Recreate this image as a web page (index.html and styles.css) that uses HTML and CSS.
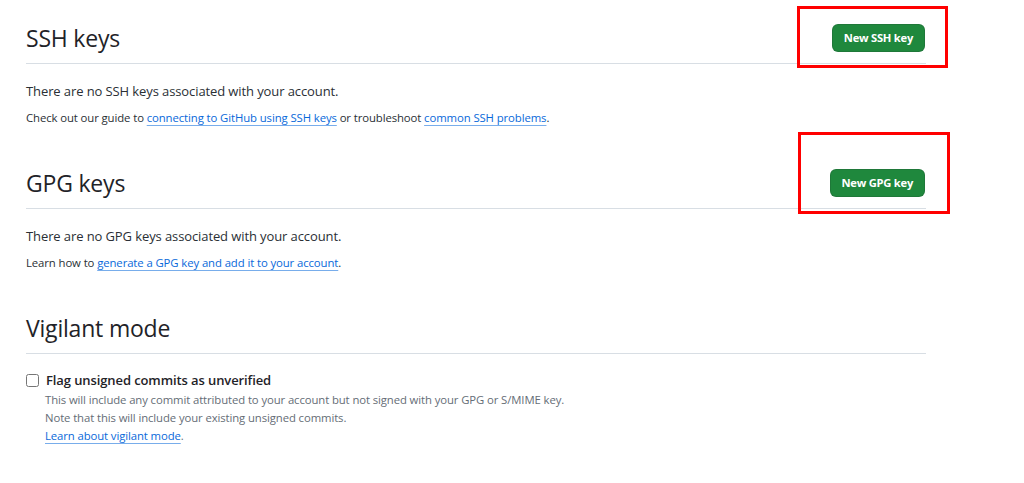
FILE: index.html
```html
<!DOCTYPE html>
<html lang="en">
<head>
<meta charset="utf-8">
<title>SSH and GPG keys</title>
<link rel="stylesheet" href="styles.css">
</head>
<body>
<main class="page">
  <section class="section">
    <div class="subhead">
      <h2 class="subhead-title">SSH keys</h2>
      <button class="btn-primary" type="button">New SSH key</button>
    </div>
    <p class="blank">There are no SSH keys associated with your account.</p>
    <p class="note">Check out our guide to <a href="#">connecting to GitHub using SSH keys</a> or troubleshoot <a href="#">common SSH problems</a>.</p>
  </section>

  <section class="section">
    <div class="subhead">
      <h2 class="subhead-title">GPG keys</h2>
      <button class="btn-primary" type="button">New GPG key</button>
    </div>
    <p class="blank">There are no GPG keys associated with your account.</p>
    <p class="note">Learn how to <a href="#">generate a GPG key and add it to your account</a>.</p>
  </section>

  <section class="section">
    <div class="subhead">
      <h2 class="subhead-title">Vigilant mode</h2>
    </div>
    <div class="check-row">
      <input class="check" type="checkbox" id="vigilant">
      <div class="check-body">
        <label class="check-label" for="vigilant">Flag unsigned commits as unverified</label>
        <p class="check-note">This will include any commit attributed to your account but not signed with your GPG or S/MIME key.</p>
        <p class="check-note">Note that this will include your existing unsigned commits.</p>
        <p class="check-note"><a href="#">Learn about vigilant mode</a>.</p>
      </div>
    </div>
  </section>

  <div class="mark mark-ssh"></div>
  <div class="mark mark-gpg"></div>
</main>
</body>
</html>
```

FILE: styles.css
```css
* { box-sizing: border-box; }

html, body {
  margin: 0;
  padding: 0;
  background: #ffffff;
}

body {
  font-family: "Open Sans", "Noto Sans", "Liberation Sans", sans-serif;
  color: #1f2328;
}

.page {
  position: relative;
  width: 900px;
  margin-left: 26px;
  padding-top: 20px;
}

.section {
  margin-bottom: 38px;
}

.subhead {
  display: flex;
  align-items: center;
  justify-content: space-between;
  height: 44px;
  padding-bottom: 7px;
  border-bottom: 1px solid #d8dee4;
}

.subhead-title {
  margin: 0;
  font-size: 23px;
  font-weight: 400;
  line-height: 36px;
  color: #1f2328;
  letter-spacing: -0.2px;
}

.btn-primary {
  height: 28px;
  padding: 0 11px;
  margin-right: 1px;
  border: 1px solid rgba(31, 35, 40, 0.15);
  border-radius: 6px;
  background: #1f883d;
  color: #ffffff;
  font-family: inherit;
  font-size: 11.2px;
  font-weight: 700;
  line-height: 26px;
  letter-spacing: -0.25px;
}

.blank {
  margin: 17px 0 0;
  font-size: 13px;
  line-height: 21px;
  color: #2a2f35;
  letter-spacing: -0.1px;
}

.note {
  margin: 7px 0 0;
  font-size: 11.35px;
  line-height: 18px;
  color: #2a2f35;
  letter-spacing: -0.1px;
}

a {
  color: #0969da;
  text-decoration: underline;
  text-decoration-color: rgba(9, 105, 218, 0.55);
  text-underline-offset: 3px;
}

.check-row {
  display: flex;
  align-items: flex-start;
  gap: 6px;
  margin-top: 16px;
}

.check {
  width: 13px;
  height: 13px;
  margin: 4px 0 0 0;
}

.check-label {
  display: block;
  margin-left: 1px;
  font-size: 13px;
  font-weight: 600;
  line-height: 21px;
  color: #1f2328;
  letter-spacing: -0.1px;
}

.check-note {
  margin: 0;
  font-size: 11.33px;
  line-height: 18px;
  color: #656d76;
  letter-spacing: -0.1px;
}

.mark {
  position: absolute;
  border: 3px solid #ff0000;
}

.mark-ssh {
  left: 771px;
  top: 6px;
  width: 151px;
  height: 62px;
}

.mark-gpg {
  left: 772px;
  top: 132px;
  width: 152px;
  height: 82px;
}
```
